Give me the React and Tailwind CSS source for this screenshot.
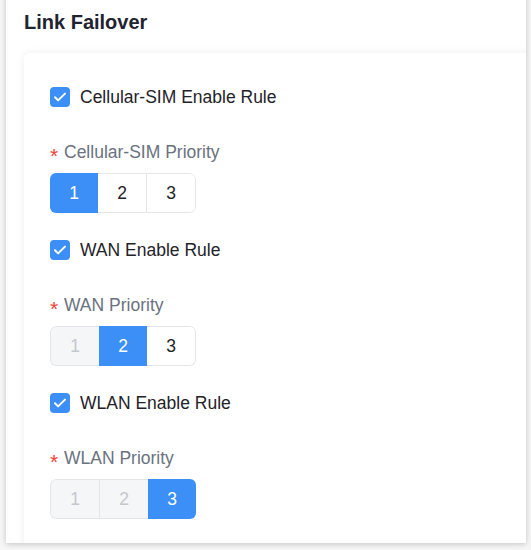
import React from "react";

const rules = [
    { name: "Cellular-SIM", priority: 1 },
    { name: "WAN", priority: 2 },
    { name: "WLAN", priority: 3 },
];

function Checkbox() {
    return (
        <span className="w-5 h-5 rounded-[4px] bg-[#3b8ff6] flex items-center justify-center shrink-0">
            <svg width="16" height="16" viewBox="0 0 16 16" fill="none">
                <path d="M3 8.3l3.1 3.1L13 4.6" stroke="white" strokeWidth="2" strokeLinecap="round" strokeLinejoin="round" />
            </svg>
        </span>
    );
}

function PriorityGroup({ value }) {
    return (
        <div className="flex h-10 w-[146px] rounded-[6px] overflow-hidden">
            {[1, 2, 3].map((n, i) => {
                const active = n === value;
                const disabled = n < value;
                const first = i === 0;
                const last = i === 2;
                let cls = "flex-1 flex items-center justify-center text-[17.5px] ";
                if (active) {
                    cls += "bg-[#3b8ff6] text-white";
                } else if (disabled) {
                    cls += "bg-[#f5f6f8] text-[#c4c7cc] border-y border-[#e3e5e9]";
                } else {
                    cls += "bg-white text-[#1f2328] border-y border-[#e3e5e9]";
                }
                if (!active && first) cls += " border-l rounded-l-[6px]";
                if (!active && last) cls += " border-r rounded-r-[6px]";
                if (!active && !first && n - 1 !== value) cls += " border-l";
                return (
                    <div key={n} className={cls}>
                        {n}
                    </div>
                );
            })}
        </div>
    );
}

export default function App() {
    return (
        <div className="w-[531px] h-[550px] bg-[#f7f7f7] overflow-hidden" style={{ fontFamily: '"Liberation Sans", Arial, sans-serif' }}>
            {/* Outer card */}
            <div className="ml-[6px] -mt-3 w-[520px] h-[555px] bg-white shadow-[0_1px_6px_rgba(0,0,0,0.22)] overflow-hidden pt-3">
                <h2 className="px-[18px] pt-[8px] h-[53px] text-[20px] leading-[28px] font-bold text-[#1f2430]">
                    Link Failover
                </h2>

                {/* Inner card */}
                <div className="ml-[18px] w-[560px] h-[600px] bg-white rounded-[6px] shadow-[0_0_8px_rgba(0,0,0,0.07)] pl-[26px] pt-[34px]">
                    {rules.map((r, idx) => (
                        <div key={r.name} className={idx > 0 ? "mt-[27px]" : ""}>
                            <label className="flex items-center gap-[10px] h-5">
                                <Checkbox />
                                <span className="text-[17.5px] text-[#1f2328] leading-5">{r.name} Enable Rule</span>
                            </label>
                            <div className="mt-[33px] h-6 flex items-center text-[17.5px] leading-6">
                                <span className="text-[#f0443a] w-[14px] text-[21px] font-light translate-y-[4px]">*</span>
                                <span className="text-[#6b7280]">{r.name} Priority</span>
                            </div>
                            <div className="mt-[9px]">
                                <PriorityGroup value={r.priority} />
                            </div>
                        </div>
                    ))}
                </div>
            </div>
        </div>
    );
}
